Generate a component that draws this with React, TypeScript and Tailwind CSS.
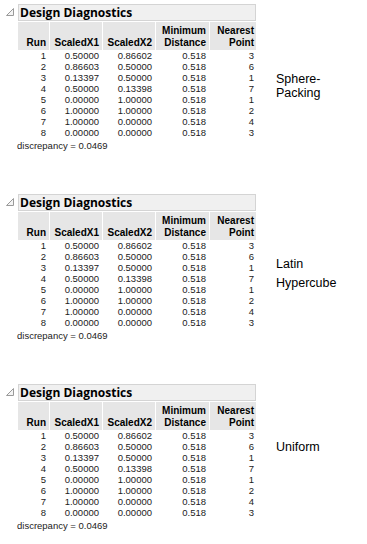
import React from "react";

const rows: [string, string, string, string, string][] = [
  ["1", "0.50000", "0.86602", "0.518", "3"],
  ["2", "0.86603", "0.50000", "0.518", "6"],
  ["3", "0.13397", "0.50000", "0.518", "1"],
  ["4", "0.50000", "0.13398", "0.518", "7"],
  ["5", "0.00000", "1.00000", "0.518", "1"],
  ["6", "1.00000", "1.00000", "0.518", "2"],
  ["7", "1.00000", "0.00000", "0.518", "4"],
  ["8", "0.00000", "0.00000", "0.518", "3"],
];

const colW = ["w-[31px]", "w-[52px]", "w-[52px]", "w-[53px]", "w-[46px]"];

function Triangle() {
  return (
    <svg width="10" height="10" viewBox="0 0 10 10" className="shrink-0">
      <path d="M1.5 8.5 L8.5 1.5 L8.5 8.5 Z" fill="#f4f4f4" stroke="#9a9a9a" strokeWidth="1" />
    </svg>
  );
}

function Panel({ label }: { label: React.ReactNode }) {
  return (
    <div className="flex">
      <div className="flex flex-col w-[256px]">
        <div className="flex items-center h-[17px]">
          <div className="w-[18px] flex justify-center pl-[2px] pb-[1px]">
            <Triangle />
          </div>
          <div className="flex-1 h-[17px] bg-[#f0f0f0] border border-[#d4d4d4] flex items-center pl-[1px] text-[12px] font-bold text-black leading-none font-['Open_Sans',sans-serif]">
            Design Diagnostics
          </div>
        </div>
        <div className="pl-[18px] mt-[1px] font-['Liberation_Sans',Arial,sans-serif]">
          <div className="flex gap-[1px] h-[28px] text-[10px] font-bold text-black leading-[11.5px]">
            <div className={`${colW[0]} bg-[#e6e6e6] flex items-end justify-end pr-[3px] pb-[2px]`}>Run</div>
            <div className={`${colW[1]} bg-[#e6e6e6] flex items-end justify-end pr-[3px] pb-[2px]`}>ScaledX1</div>
            <div className={`${colW[2]} bg-[#e6e6e6] flex items-end justify-end pr-[3px] pb-[2px]`}>ScaledX2</div>
            <div className={`${colW[3]} bg-[#e6e6e6] flex flex-col items-end justify-end pr-[3px] pb-[2px]`}>
              <span>Minimum</span>
              <span>Distance</span>
            </div>
            <div className={`${colW[4]} bg-[#e6e6e6] flex flex-col items-end justify-end pr-[2px] pb-[2px]`}>
              <span>Nearest</span>
              <span>Point</span>
            </div>
          </div>
          <div className="flex flex-col text-[9.5px] text-[#222] leading-[11px]">
            {rows.map((r, i) => (
              <div key={i} className="flex gap-[1px] h-[11px]">
                <div className={`${colW[0]} text-right pr-[3px]`}>{r[0]}</div>
                <div className={`${colW[1]} text-right pr-[3px]`}>{r[1]}</div>
                <div className={`${colW[2]} text-right pr-[3px]`}>{r[2]}</div>
                <div className={`${colW[3]} text-right pr-[3px]`}>{r[3]}</div>
                <div className={`${colW[4]} text-right pr-[2px]`}>{r[4]}</div>
              </div>
            ))}
          </div>
        </div>
        <div className="pl-[17px] mt-[2px] text-[9.5px] text-[#222] leading-[12px] font-['Liberation_Sans',Arial,sans-serif]">
          discrepancy = 0.0469
        </div>
      </div>
      <div className="pl-[20px] text-[12.5px] text-black font-['Liberation_Sans',Arial,sans-serif]">{label}</div>
    </div>
  );
}

export default function App() {
  return (
    <div className="w-[367px] h-[544px] bg-white pt-[4px] flex flex-col gap-[42px]">
      <Panel
        label={
          <div className="pt-[68px] leading-[14px]">
            Sphere-
            <br />
            Packing
          </div>
        }
      />
      <Panel
        label={
          <div className="pt-[61px] leading-[19px]">
            Latin
            <br />
            Hypercube
          </div>
        }
      />
      <Panel label={<div className="pt-[56px] leading-[14px]">Uniform</div>} />
    </div>
  );
}
